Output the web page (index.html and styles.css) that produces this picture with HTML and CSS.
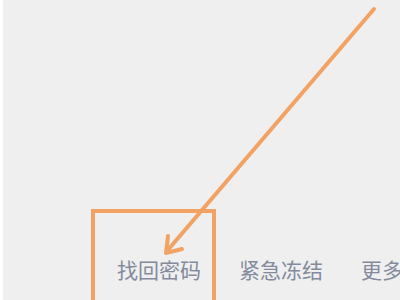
FILE: index.html
```html
<!DOCTYPE html>
<html lang="zh-CN">
<head>
    <meta charset="UTF-8">
    <title>找回密码</title>
    <link rel="stylesheet" href="styles.css">
</head>
<body>

    <div class="screen">
        <div class="links">
            <a href="#find">找回密码</a>
            <span class="sep"></span>
            <a href="#freeze">紧急冻结</a>
            <span class="sep"></span>
            <a href="#more">更多</a>
        </div>

        <!-- 标注：箭头和方框 -->
        <svg class="mark" width="400" height="300" viewBox="0 0 400 300">
            <rect x="93" y="211" width="121" height="110" fill="none" stroke="#f2a262" stroke-width="4"/>
            <line x1="374" y1="9" x2="167" y2="251" stroke="#f2a262" stroke-width="4" stroke-linecap="round"/>
            <polyline points="168,236 166,253 182,249" fill="none" stroke="#f2a262" stroke-width="4" stroke-linecap="round" stroke-linejoin="round"/>
        </svg>
    </div>

</body>
</html>
```

FILE: styles.css
```css
body {
    margin: 0;
    padding: 0;
    background-color: #fff;
    font-family: "Noto Sans CJK SC", "Noto Sans", sans-serif;
}

.screen {
    position: relative;
    margin-left: 3px;
    height: 300px;
    background-color: #efefef;
    display: flex;
    flex-direction: column;
    justify-content: flex-end;
    overflow: hidden;
}

.links {
    display: flex;
    align-items: center;
    padding: 0 0 14px 114px;
    white-space: nowrap;
}
.links a {
    color: #838b9c;
    font-size: 21px;
    line-height: 34px;
    text-decoration: none;
}
.sep {
    width: 1px;
    height: 34px;
    margin: 0 19px;
    background-color: #cfcfcf;
}

.mark {
    position: absolute;
    left: -3px;
    top: 0;
}
```
